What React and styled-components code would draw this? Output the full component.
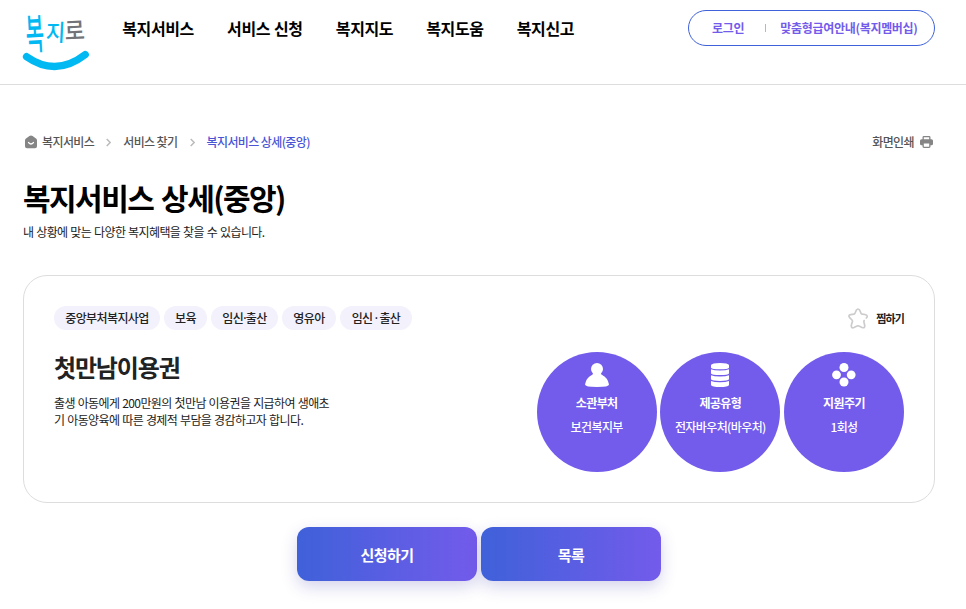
import React from "react";
import styled, { createGlobalStyle } from "styled-components";

const GlobalStyle = createGlobalStyle`
  * {
    box-sizing: border-box;
  }

  body {
    margin: 0;
    background: #fff;
    color: #222;
    font-family: "Noto Sans CJK KR", "Noto Sans", sans-serif;
    font-size: 12px;
    letter-spacing: -0.6px;
  }

  h1, h2, p {
    margin: 0;
  }

  svg {
    display: block;
    flex: none;
  }
`;

const Header = styled.header`
  display: flex;
  align-items: flex-start;
  height: 85px;
  padding: 0 31px 0 22px;
  border-bottom: 1px solid #ddd;
`;

const StyledLogo = styled.svg`
  overflow: visible;
`;

const LogoText = styled.text`
  font-weight: 500;
  letter-spacing: 0;
`;

const Nav = styled.nav`
  display: flex;
  gap: 33.2px;
  margin: 16px 0 0 32.3px;
`;

const NavItem = styled.a`
  color: #000;
  font-size: 16px;
  font-weight: 700;
  letter-spacing: -0.4px;
  line-height: 24px;
  white-space: nowrap;
  word-spacing: 0.7px;
`;

const UserMenu = styled.div`
  display: flex;
  align-items: center;
  width: 247px;
  height: 36px;
  margin: 10px 0 0 auto;
  padding-left: 23px;
  border: 1px solid #3f61d9;
  border-radius: 18px;
  color: #735beb;
  font-weight: 700;
  letter-spacing: -0.3px;
  line-height: 18px;
  white-space: nowrap;
`;

const Divider = styled.span`
  width: 1px;
  height: 8px;
  margin: 0 14px 0 21px;
  background: #b8b2df;
`;

const Main = styled.main`
  padding: 48px 31px 28px 23px;
`;

const TopRow = styled.div`
  display: flex;
  justify-content: space-between;
  height: 18px;
  line-height: 18px;
`;

const Breadcrumb = styled.div`
  display: flex;
  align-items: center;
  font-weight: 500;
`;

const Crumb = styled.span`
  color: ${({ $current }) => ($current ? "#4a55d5" : "#555")};
`;

const HomeCrumb = styled(Crumb)`
  display: flex;
  align-items: center;
  gap: 4px;
  padding-left: 1px;
`;

const Print = styled.div`
  display: flex;
  align-items: center;
  gap: 6px;
  padding-right: 2px;
  color: #555;
  font-weight: 500;
`;

const Title = styled.h1`
  margin-top: 24px;
  color: #000;
  font-size: 30px;
  font-weight: 700;
  letter-spacing: -1.55px;
  line-height: 44px;
  word-spacing: 2.6px;
`;

const Lead = styled.p`
  margin-top: 4px;
  line-height: 18px;
  word-spacing: 0.7px;
`;

const Card = styled.section`
  height: 228px;
  margin-top: 34px;
  padding: 30px;
  border: 1px solid #ddd;
  border-radius: 24px;
`;

const CardTop = styled.div`
  display: flex;
  align-items: center;
  justify-content: space-between;
  height: 24px;
`;

const Tags = styled.div`
  display: flex;
  gap: 4px;
`;

const Tag = styled.span`
  width: ${({ $width }) => $width}px;
  height: 24px;
  border-radius: 12px;
  background: #f3f1fc;
  font-weight: 500;
  line-height: 24px;
  text-align: center;
  white-space: nowrap;
`;

const Dot = styled.span`
  font-family: "Noto Sans", sans-serif;
  line-height: 1;
`;

const Wish = styled.div`
  display: flex;
  align-items: center;
  gap: 8px;
  font-size: 11px;
  font-weight: 700;
  letter-spacing: -0.9px;
  line-height: 24px;
`;

const CardBody = styled.div`
  display: flex;
  justify-content: space-between;
  margin-top: 21px;
`;

const ServiceName = styled.h2`
  margin-bottom: 11px;
  font-size: 24px;
  font-weight: 700;
  letter-spacing: -1.15px;
  line-height: 32px;
`;

const Description = styled.p`
  line-height: 17px;
  white-space: nowrap;
  word-spacing: 0.7px;
`;

const Circles = styled.div`
  display: flex;
  gap: 3.67px;
  margin-top: 1px;
`;

const Circle = styled.div`
  display: flex;
  flex-direction: column;
  align-items: center;
  width: 120px;
  height: 120px;
  padding-top: 11px;
  border-radius: 50%;
  background: #735beb;
  color: #fff;
  line-height: 18px;
  white-space: nowrap;
`;

const CircleLabel = styled.span`
  margin-top: 7px;
  font-weight: 700;
`;

const CircleValue = styled.span`
  margin-top: 6px;
  font-weight: 500;
`;

const Actions = styled.div`
  display: flex;
  justify-content: center;
  gap: 4px;
  margin-top: 24px;
`;

const Button = styled.button`
  width: 180px;
  height: 54px;
  padding: 0;
  border: 0;
  border-radius: 12px;
  background: linear-gradient(90deg, #3f61d9, #735beb);
  box-shadow: 0 6px 16px rgba(63, 61, 175, 0.22);
  color: #fff;
  font-family: inherit;
  font-size: 15px;
  font-weight: 700;
  letter-spacing: -0.5px;
`;

const StyledChevron = styled.svg`
  margin: 0 12px;
`;

const Logo = () => (
  <StyledLogo width="68" height="72" viewBox="0 0 68 72">
    <LogoText fontSize="21" fill="#00b9f2" transform="translate(4.5 49.5) rotate(-3) scale(.95 1.98)">
      복
    </LogoText>
    <LogoText fontSize="21" fill="#00b9f2" transform="translate(23.5 41) skewX(-3) scale(1 1.1)">
      지
    </LogoText>
    <LogoText fontSize="22" fill="#727377" transform="translate(43 40) rotate(-3) scale(1 1.1)">
      로
    </LogoText>
    <path d="M4.6 56.7 Q34 77.2 63.2 54.6" fill="none" stroke="#00b9f2" strokeWidth="7.4" strokeLinecap="round" />
  </StyledLogo>
);

const HomeIcon = () => (
  <svg width="14" height="14" viewBox="0 0 14 14">
    <path d="M7 .5 Q7.8.5 8.6 1.1 L12 3.5 Q13 4.3 13 5.4 V11.2 Q13 13.2 11 13.2 H3 Q1 13.2 1 11.2 V5.4 Q1 4.3 2 3.5 L5.4 1.1 Q6.2.5 7 .5Z" fill="#858585" />
    <path d="M4.6 7.6 Q7 10.4 9.4 7.6" fill="none" stroke="#fff" strokeWidth="1.4" strokeLinecap="round" />
  </svg>
);

const Chevron = () => (
  <StyledChevron width="5" height="9" viewBox="0 0 5 9">
    <path d="M.7 1 L4.2 4.5 L.7 8" fill="none" stroke="#bbb" strokeWidth="1.5" />
  </StyledChevron>
);

const PrintIcon = () => (
  <svg width="13" height="12" viewBox="0 0 13 12">
    <path d="M2.5 3.2 V1.4 Q2.5 0 3.9 0 H9.1 Q10.5 0 10.5 1.4 V3.2 H11.5 Q13 3.2 13 4.7 V7.7 Q13 9.2 11.5 9.2 H10.5 V10.6 Q10.5 12 9.1 12 H3.9 Q2.5 12 2.5 10.6 V9.2 H1.5 Q0 9.2 0 7.7 V4.7 Q0 3.2 1.5 3.2Z" fill="#858585" />
    <path d="M3.8 1.3 H9.2 V3.2 H3.8Z M3.8 7.5 H9.2 V10.7 H3.8Z" fill="#fff" />
  </svg>
);

const StarIcon = () => (
  <svg width="20" height="21" viewBox="0 0 20 21">
    <path
      d="M18.3 10 Q20 8.4 18.5 7.2 Q17.6 6.5 14.1 6.2 Q13.3 6 13 5.2 L11.7 2.2 Q10 -.2 8.3 2.2 L7 5.2 Q6.7 6 5.9 6.2 L2.7 6.6 Q-.2 7.2 1.7 9.7 L4 12 Q4.6 12.6 4.4 13.5 L3.3 17.3 Q3.1 20.6 6 19.5 L9 18.1 Q10 17.6 11 18.1 L14 19.5 Q17.1 20.6 16.7 17.3 L16 14.2 Q15.8 13.2 16.1 12.6"
      fill="none"
      stroke="#ccc"
      strokeWidth="1.7"
      strokeLinecap="round"
    />
  </svg>
);

const PersonIcon = () => (
  <svg width="24" height="24" viewBox="0 0 24 24" fill="#fff">
    <circle cx="12" cy="6" r="6" />
    <path d="M9 9 H15 Q15 11 17.2 12 Q23 15 24 21.5 Q24 24 12 24 Q0 24 0 21.5 Q1 15 6.8 12 Q9 11 9 9Z" />
  </svg>
);

const StackIcon = () => (
  <svg width="18" height="24" viewBox="0 0 18 24" fill="#fff">
    <path d="M0 2 Q1 0 9 0 Q17 0 18 2 V4.7 Q17 6.3 9 6.3 Q1 6.3 0 4.7Z" />
    <path d="M0 6.3 Q3 7.6 9 7.6 Q15 7.6 18 6.3 V10.4 Q17 12 9 12 Q1 12 0 10.4Z" />
    <path d="M0 12.2 Q3 13.4 9 13.4 Q15 13.4 18 12.2 V16.3 Q17 17.9 9 17.9 Q1 17.9 0 16.3Z" />
    <path d="M0 18.1 Q3 19.3 9 19.3 Q15 19.3 18 18.1 V22 Q17 24 9 24 Q1 24 0 22Z" />
  </svg>
);

const DotsIcon = () => (
  <svg width="24" height="24" viewBox="0 0 24 24" fill="#fff">
    <circle cx="12" cy="4.5" r="4.5" />
    <circle cx="4.5" cy="11.8" r="4.4" />
    <circle cx="19.2" cy="11.8" r="4.4" />
    <circle cx="12" cy="19" r="4.5" />
  </svg>
);

const menus = ["복지서비스", "서비스 신청", "복지지도", "복지도움", "복지신고"];

const tags = [
  { name: "중앙부처복지사업", width: 106 },
  { name: "보육", width: 43 },
  { name: <>임신<Dot>·</Dot>출산</>, width: 67 },
  { name: "영유아", width: 54 },
  { name: <>임신 <Dot>·</Dot> 출산</>, width: 72 },
];

const infos = [
  { label: "소관부처", value: "보건복지부", Icon: PersonIcon },
  { label: "제공유형", value: "전자바우처(바우처)", Icon: StackIcon },
  { label: "지원주기", value: "1회성", Icon: DotsIcon },
];

const App = () => (
  <>
    <GlobalStyle />
    <Header>
      <Logo />
      <Nav>
        {menus.map((menu) => (
          <NavItem key={menu}>{menu}</NavItem>
        ))}
      </Nav>
      <UserMenu>
        <span>로그인</span>
        <Divider />
        <span>맞춤형급여안내(복지멤버십)</span>
      </UserMenu>
    </Header>
    <Main>
      <TopRow>
        <Breadcrumb>
          <HomeCrumb>
            <HomeIcon />
            복지서비스
          </HomeCrumb>
          <Chevron />
          <Crumb>서비스 찾기</Crumb>
          <Chevron />
          <Crumb $current>복지서비스 상세(중앙)</Crumb>
        </Breadcrumb>
        <Print>
          화면인쇄
          <PrintIcon />
        </Print>
      </TopRow>
      <Title>복지서비스 상세(중앙)</Title>
      <Lead>내 상황에 맞는 다양한 복지혜택을 찾을 수 있습니다.</Lead>
      <Card>
        <CardTop>
          <Tags>
            {tags.map(({ name, width }) => (
              <Tag key={width} $width={width}>
                {name}
              </Tag>
            ))}
          </Tags>
          <Wish>
            <StarIcon />
            찜하기
          </Wish>
        </CardTop>
        <CardBody>
          <div>
            <ServiceName>첫만남이용권</ServiceName>
            <Description>
              출생 아동에게 200만원의 첫만남 이용권을 지급하여 생애초
              <br />기 아동양육에 따른 경제적 부담을 경감하고자 합니다.
            </Description>
          </div>
          <Circles>
            {infos.map(({ label, value, Icon }) => (
              <Circle key={label}>
                <Icon />
                <CircleLabel>{label}</CircleLabel>
                <CircleValue>{value}</CircleValue>
              </Circle>
            ))}
          </Circles>
        </CardBody>
      </Card>
      <Actions>
        <Button>신청하기</Button>
        <Button>목록</Button>
      </Actions>
    </Main>
  </>
);

export default App;
